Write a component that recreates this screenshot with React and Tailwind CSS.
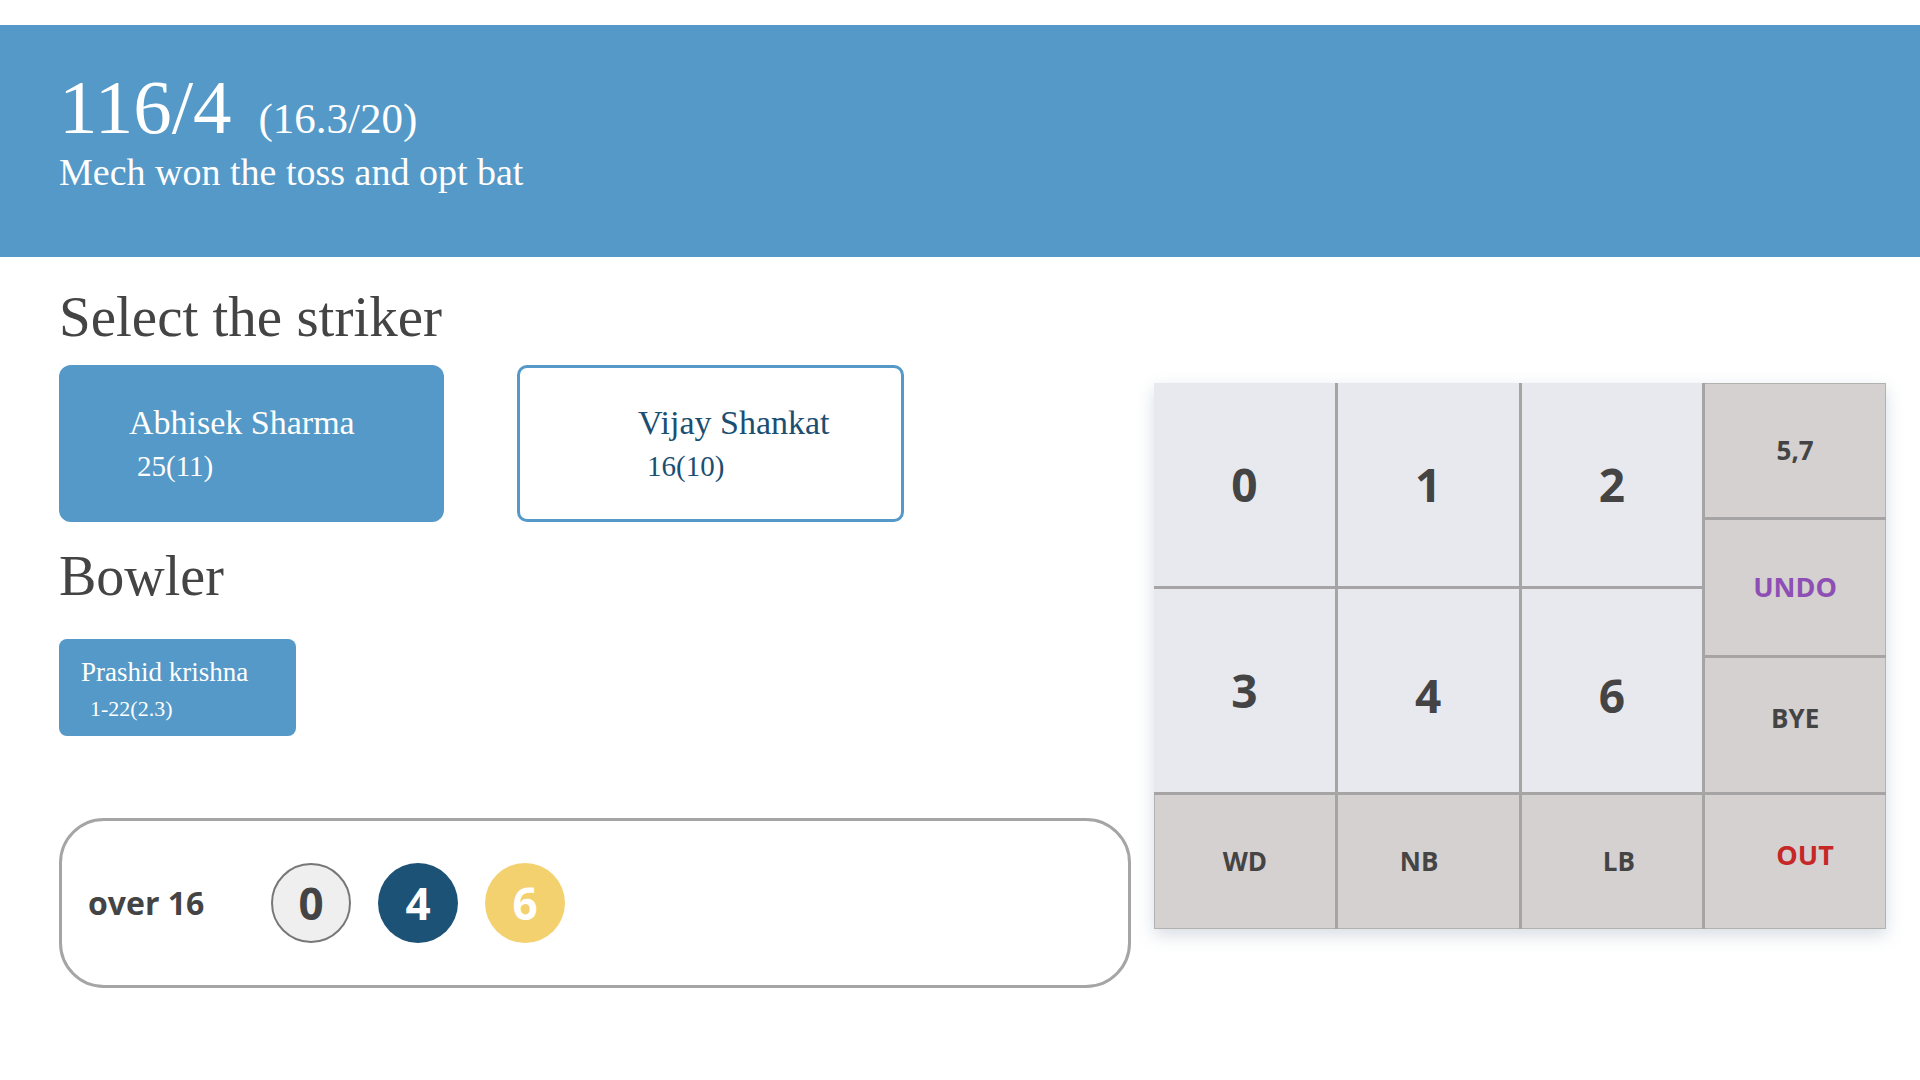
const serif = { fontFamily: '"Liberation Serif", "Times New Roman", serif' }
const sans = { fontFamily: '"Open Sans", "Noto Sans", sans-serif' }

const keys = [
  { label: '0', cls: 'col-start-1 row-start-1 row-span-3 bg-[#e8e9ee] text-[46px] text-[#444]' },
  { label: '1', cls: 'col-start-2 row-start-1 row-span-3 bg-[#e8e9ee] text-[46px] text-[#444]' },
  { label: '2', cls: 'col-start-3 row-start-1 row-span-3 bg-[#e8e9ee] text-[46px] text-[#444]' },
  { label: '5,7', cls: 'col-start-4 row-start-1 row-span-2 bg-[#d5d1d0] text-[26px] text-[#444] border-t border-r border-[#b3b0b0]' },
  { label: 'UNDO', cls: 'col-start-4 row-start-3 row-span-2 bg-[#d5d1d0] text-[27px] text-[#8e4fb5] border-r border-[#b3b0b0]' },
  { label: '3', cls: 'col-start-1 row-start-4 row-span-3 bg-[#e8e9ee] text-[46px] text-[#444]' },
  { label: '4', cls: 'col-start-2 row-start-4 row-span-3 bg-[#e8e9ee] text-[46px] text-[#444] pt-[10px]' },
  { label: '6', cls: 'col-start-3 row-start-4 row-span-3 bg-[#e8e9ee] text-[46px] text-[#444] pt-[10px]' },
  { label: 'BYE', cls: 'col-start-4 row-start-5 row-span-2 bg-[#d5d1d0] text-[26px] text-[#444] border-r border-[#b3b0b0] pb-[12px]' },
  { label: 'WD', cls: 'col-start-1 row-start-7 row-span-2 bg-[#d5d1d0] text-[26px] text-[#444] border-l border-b border-[#b3b0b0]' },
  { label: 'NB', cls: 'col-start-2 row-start-7 row-span-2 bg-[#d5d1d0] text-[26px] text-[#444] border-b border-[#b3b0b0] pr-[18px]' },
  { label: 'LB', cls: 'col-start-3 row-start-7 row-span-2 bg-[#d5d1d0] text-[26px] text-[#444] border-b border-[#b3b0b0] pl-[14px]' },
  { label: 'OUT', cls: 'col-start-4 row-start-7 row-span-2 bg-[#d5d1d0] text-[27px] text-[#c62828] border-r border-b border-[#b3b0b0] pl-[20px] pb-[12px]' },
]

export default function App() {
  return (
    <div className="min-h-screen bg-white pt-[25px]">
      {/* Score header */}
      <div className="h-[232px] bg-[#5499c7] pl-[59px] pt-[44px] text-white" style={serif}>
        <div className="flex items-baseline">
          <span className="text-[77px] leading-none">116/4</span>
          <span className="ml-[27px] text-[43px] leading-none">(16.3/20)</span>
        </div>
        <div className="mt-[7px] text-[38px] leading-none">Mech won the toss and opt bat</div>
      </div>

      <div className="flex pl-[59px] pt-[31px]">
        {/* Left side */}
        <div className="w-[1072px] shrink-0">
          <h2 className="text-[57px] leading-none text-[#444]" style={serif}>Select the striker</h2>
          <div className="mt-[20px] flex gap-[73px]" style={serif}>
            <div className="h-[157px] w-[385px] rounded-[12px] bg-[#5499c7] pl-[70px] pt-[41px] text-white">
              <div className="text-[34px] leading-none">Abhisek Sharma</div>
              <div className="mt-[12px] pl-[8px] text-[29px] leading-none">25(11)</div>
            </div>
            <div className="h-[157px] w-[387px] rounded-[10px] border-[3px] border-[#5499c7] pl-[118px] pt-[38px] text-[#1b4f72]">
              <div className="text-[34px] leading-none">Vijay Shankat</div>
              <div className="mt-[12px] pl-[9px] text-[29px] leading-none">16(10)</div>
            </div>
          </div>

          <h2 className="mt-[26px] text-[56px] leading-none text-[#444]" style={serif}>Bowler</h2>
          <div className="mt-[35px] h-[97px] w-[237px] rounded-[8px] bg-[#5499c7] pl-[22px] pt-[20px] text-white" style={serif}>
            <div className="text-[27px] leading-none">Prashid krishna</div>
            <div className="mt-[12px] pl-[9px] text-[22px] leading-none">1-22(2.3)</div>
          </div>

          {/* This over */}
          <div className="mt-[82px] flex h-[170px] items-center rounded-[45px] border-[3px] border-[#a5a5a5] pl-[26px]" style={sans}>
            <span className="w-[183px] text-[32px] font-bold text-[#444]">over 16</span>
            <div className="flex gap-[27px]">
              <div className="flex h-[80px] w-[80px] items-center justify-center rounded-full border-2 border-[#777] bg-[#efefef] text-[44px] font-bold text-[#444]">0</div>
              <div className="flex h-[80px] w-[80px] items-center justify-center rounded-full bg-[#1b5276] text-[44px] font-bold text-white">4</div>
              <div className="flex h-[80px] w-[80px] items-center justify-center rounded-full bg-[#f3d16f] text-[44px] font-bold text-white">6</div>
            </div>
          </div>
        </div>

        {/* Keypad */}
        <div
          className="ml-[23px] mt-[95px] grid h-[546px] w-[732px] shrink-0 grid-cols-4 grid-rows-8 gap-[3px] bg-[#a6a4a4] shadow-[0_6px_16px_rgba(70,100,130,0.22)]"
          style={sans}
        >
          {keys.map((k) => (
            <div key={k.label} className={`flex items-center justify-center font-bold ${k.cls}`}>
              {k.label}
            </div>
          ))}
        </div>
      </div>
    </div>
  )
}
